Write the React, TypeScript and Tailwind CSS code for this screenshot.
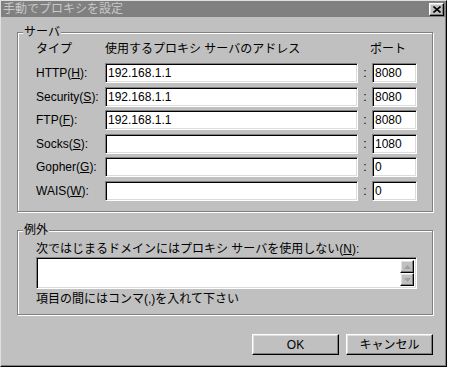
import type { ReactNode } from 'react';

const sunken =
  'bg-white border border-t-[#808080] border-l-[#808080] border-b-white border-r-white shadow-[inset_1px_1px_0_#000,inset_-1px_-1px_0_#dcdcdc]';
const raised =
  'bg-[#c0c0c0] border border-t-white border-l-white border-b-black border-r-black shadow-[inset_-1px_-1px_0_#808080,inset_1px_1px_0_#dfdfdf]';

const rows = [
  { name: 'HTTP', key: 'H', addr: '192.168.1.1', port: '8080' },
  { name: 'Security', key: 'S', addr: '192.168.1.1', port: '8080' },
  { name: 'FTP', key: 'F', addr: '192.168.1.1', port: '8080' },
  { name: 'Socks', key: 'S', addr: '', port: '1080' },
  { name: 'Gopher', key: 'G', addr: '', port: '0' },
  { name: 'WAIS', key: 'W', addr: '', port: '0' },
];

function Group({ label, className, children }: { label: string; className: string; children: ReactNode }) {
  return (
    <div
      className={`relative ml-[16px] w-[416px] border border-[#808080] shadow-[inset_1px_1px_0_#fff,1px_1px_0_#fff] ${className}`}
    >
      <span className="absolute left-[5px] top-[-9px] bg-[#c0c0c0] px-[1px] leading-[16px]">{label}</span>
      {children}
    </div>
  );
}

function Arrow({ up }: { up?: boolean }) {
  return (
    <div className={`${raised} flex h-[13px] w-[14px] items-center justify-center`}>
      <svg width="7" height="4" viewBox="0 0 7 4">
        <path d={up ? 'M3.5 0 L7 4 L0 4 Z' : 'M0 0 L7 0 L3.5 4 Z'} fill="#a0a0a0" />
      </svg>
    </div>
  );
}

export default function App() {
  return (
    <div
      className="relative h-[369px] w-[449px] overflow-hidden bg-white text-[12px] text-black"
      style={{ fontFamily: '"Liberation Sans", "Noto Sans CJK JP", sans-serif' }}
    >
      <div className="flex h-[367px] w-[447px] flex-col border border-t-[#dfdfdf] border-l-[#dfdfdf] border-b-black border-r-black bg-[#c0c0c0] shadow-[inset_-1px_-1px_0_#808080]">
        {/* title bar */}
        <div className="flex h-[16px] items-center justify-between bg-[#808080] pl-[2px] pr-[2px]">
          <span className="leading-[16px] text-[#c8c8c8]">手動でプロキシを設定</span>
          <div className={`${raised} flex h-[13px] w-[15px] items-center justify-center`}>
            <svg width="8" height="7" viewBox="0 0 8 7">
              <path d="M0.5 0.5 L7.5 6.5 M7.5 0.5 L0.5 6.5" stroke="#000" strokeWidth="1.6" />
            </svg>
          </div>
        </div>

        <Group label="サーバ" className="mt-[15px] h-[180px]">
          <div className="grid grid-cols-[69px_253px_14px_45px] pl-[18px] pt-[9px]">
            <div className="h-[14px] leading-[14px]">タイプ</div>
            <div className="h-[14px] leading-[14px]">使用するプロキシ サーバのアドレス</div>
            <div className="col-span-2 h-[14px] pl-[12px] leading-[14px]">ポート</div>
          </div>
          <div className="mt-[7px] grid grid-cols-[69px_253px_14px_45px] gap-y-[3.6px] pl-[18px]">
            {rows.map((r) => (
              <div key={r.name} className="contents">
                <div className="flex h-[20px] items-center">
                  {r.name}(<span className="underline">{r.key}</span>):
                </div>
                <div className={`${sunken} flex h-[20px] items-center pl-[2px]`}>{r.addr}</div>
                <div className="flex h-[20px] items-center justify-center">:</div>
                <div className={`${sunken} flex h-[20px] items-center pl-[2px]`}>{r.port}</div>
              </div>
            ))}
          </div>
        </Group>

        <Group label="例外" className="mt-[18px] h-[85px]">
          <div className="flex flex-col pl-[18px] pr-[15px] pt-[11px]">
            <div className="h-[14px] leading-[14px]">
              次ではじまるドメインにはプロキシ サーバを使用しない(<span className="underline">N</span>):
            </div>
            <div className={`${sunken} mt-[1px] flex h-[32px] justify-end py-[2px] pr-[2px]`}>
              <div className="flex flex-col justify-between">
                <Arrow up />
                <Arrow />
              </div>
            </div>
            <div className="mt-[3px] h-[14px] leading-[14px]">項目の間にはコンマ(,)を入れて下さい</div>
          </div>
        </Group>

        <div className="mt-[19px] flex justify-end gap-[7px] pr-[13px]">
          <button className={`${raised} h-[21px] w-[87px]`}>OK</button>
          <button className={`${raised} h-[21px] w-[87px]`}>キャンセル</button>
        </div>
      </div>
    </div>
  );
}
